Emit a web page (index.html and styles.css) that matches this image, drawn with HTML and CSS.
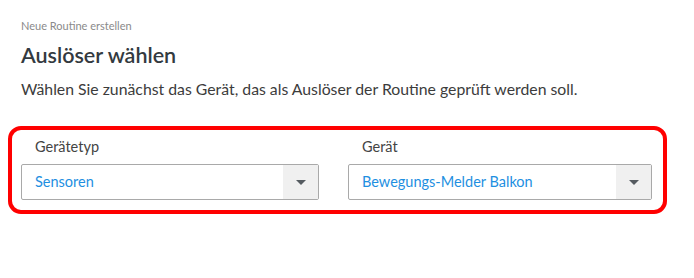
FILE: index.html
```html
<!DOCTYPE html>
<html lang="de">
<head>
    <meta charset="UTF-8">
    <meta name="viewport" content="width=device-width, initial-scale=1.0">
    <title>Neue Routine erstellen</title>
    <link rel="stylesheet" href="styles.css">
</head>
<body>
    <div class="page">
        <div class="breadcrumb">Neue Routine erstellen</div>
        <h1>Auslöser wählen</h1>
        <p class="intro">Wählen Sie zunächst das Gerät, das als Auslöser der Routine geprüft werden soll.</p>

        <div class="highlight">
            <div class="field">
                <label for="deviceType">Gerätetyp</label>
                <div class="select">
                    <span class="select-value" id="deviceType">Sensoren</span>
                    <span class="select-arrow"></span>
                </div>
            </div>
            <div class="field">
                <label for="device">Gerät</label>
                <div class="select">
                    <span class="select-value" id="device">Bewegungs-Melder Balkon</span>
                    <span class="select-arrow"></span>
                </div>
            </div>
        </div>
    </div>
</body>
</html>
```

FILE: styles.css
```css
body, html {
    margin: 0;
    padding: 0;
    background: #fff;
    font-family: Lato, "Noto Sans", sans-serif;
}

.page {
    padding: 19px 0 0 21px;
}

.breadcrumb {
    font-size: 11px;
    color: #8a8a8a;
    line-height: 14px;
}

h1 {
    margin: 9px 0 0;
    font-size: 21.5px;
    font-weight: 600;
    color: #333a40;
    line-height: 26px;
}

.intro {
    margin: 11px 0 0;
    font-size: 15.8px;
    color: #3c3c3c;
    line-height: 20px;
}

.highlight {
    display: flex;
    gap: 29px;
    width: 631px;
    margin: 27px 0 0 -13px;
    padding: 8px 11px 10px 9px;
    border: 4px solid #ff0000;
    border-radius: 13px;
}

.field {
    flex: 0 0 298px;
}

.field + .field {
    flex-basis: 304px;
}

.field label {
    display: block;
    padding-left: 14px;
    font-size: 14.5px;
    color: #444;
    line-height: 18px;
    margin-bottom: 8px;
}

.select {
    display: flex;
    height: 34px;
    border: 1px solid #a9a9a9;
    border-radius: 2px;
}

.select-value {
    flex: 1;
    padding-left: 13px;
    font-size: 14.5px;
    line-height: 34px;
    color: #1e8fe1;
}

.select-arrow {
    position: relative;
    width: 35px;
    background: #f0f0f0;
}

.select-arrow::after {
    content: "";
    position: absolute;
    left: 13px;
    top: 15px;
    border-left: 5px solid transparent;
    border-right: 5px solid transparent;
    border-top: 5px solid #555b60;
}
```
